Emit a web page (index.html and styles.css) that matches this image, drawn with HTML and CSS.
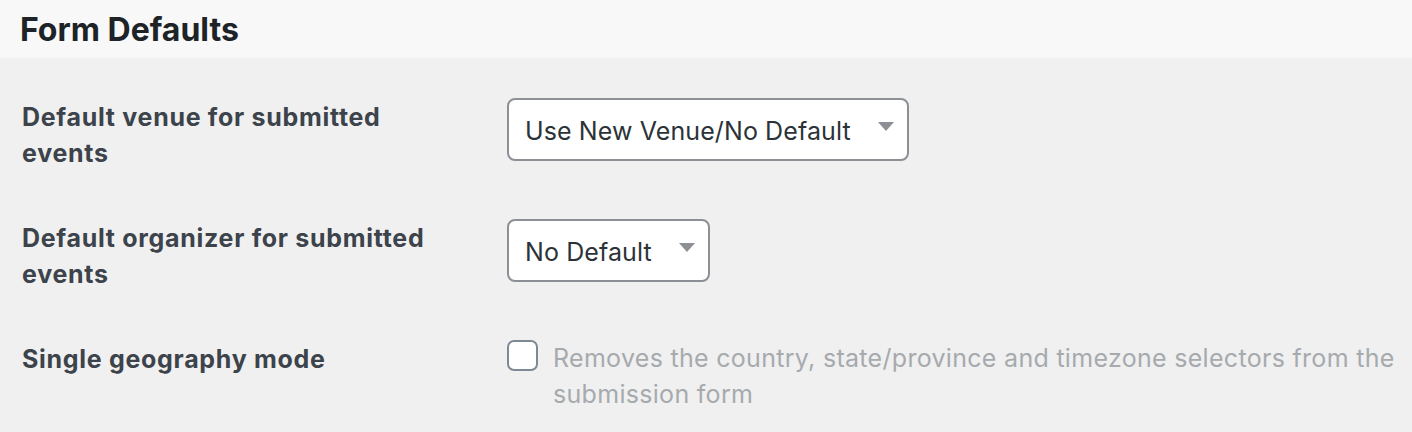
FILE: index.html
```html
<!DOCTYPE html>
<html lang="en">
<head>
    <meta charset="UTF-8">
    <title>Form Defaults</title>
    <link rel="stylesheet" href="styles.css">
</head>
<body>
<div class="section-head">
    <h2>Form Defaults</h2>
</div>

<div class="form-table">
    <div class="form-row">
        <div class="form-label">Default venue for submitted events</div>
        <div class="form-field">
            <div class="select">
                <span>Use New Venue/No Default</span>
                <svg class="caret" width="16" height="9" viewBox="0 0 16 9"><path d="M0 0h16L8 9z"/></svg>
            </div>
        </div>
    </div>

    <div class="form-row">
        <div class="form-label">Default organizer for submitted events</div>
        <div class="form-field">
            <div class="select">
                <span>No Default</span>
                <svg class="caret" width="16" height="9" viewBox="0 0 16 9"><path d="M0 0h16L8 9z"/></svg>
            </div>
        </div>
    </div>

    <div class="form-row">
        <div class="form-label">Single geography mode</div>
        <div class="form-field check-field">
            <span class="checkbox"></span>
            <p class="description">Removes the country, state/province and timezone selectors from the submission form</p>
        </div>
    </div>
</div>
</body>
</html>
```

FILE: styles.css
```css
body {
    margin: 0;
    font-family: Inter, "Liberation Sans", Arial, sans-serif;
    background-color: #f0f0f1;
    color: #3c434a;
}

.section-head {
    height: 58px;
    padding: 0 20px;
    background-color: #f8f8f8;
    display: flex;
    align-items: center;
}

.section-head h2 {
    margin: 0;
    font-size: 32px;
    font-weight: 700;
    color: #1d2327;
}

.form-table {
    padding: 40px 0 0 22px;
}

.form-row {
    display: grid;
    grid-template-columns: 485px 1fr;
    align-items: start;
    margin-bottom: 48px;
}

.form-row:last-child {
    margin-bottom: 0;
}

.form-label {
    padding-top: 1px;
    font-size: 25px;
    line-height: 36px;
    letter-spacing: 0.7px;
    font-weight: 700;
    color: #3c434a;
    width: 420px;
}

.select {
    display: inline-flex;
    align-items: center;
    gap: 27px;
    height: 63px;
    box-sizing: border-box;
    padding: 2px 13px 0 16px;
    border: 2px solid #8c8f94;
    border-radius: 8px;
    background-color: #fff;
    font-size: 25px;
    letter-spacing: 0.1px;
    color: #2c3338;
}

.caret {
    fill: #8c8f94;
    margin-top: -8px;
}

.check-field {
    display: flex;
    align-items: flex-start;
    gap: 15px;
}

.checkbox {
    flex: none;
    width: 31px;
    height: 31px;
    box-sizing: border-box;
    border: 2px solid #7e8993;
    border-radius: 7px;
    background-color: #fff;
}

.description {
    margin: 0;
    font-size: 25px;
    line-height: 36px;
    letter-spacing: 0.3px;
    color: #a7aaad;
    max-width: 860px;
}
```
